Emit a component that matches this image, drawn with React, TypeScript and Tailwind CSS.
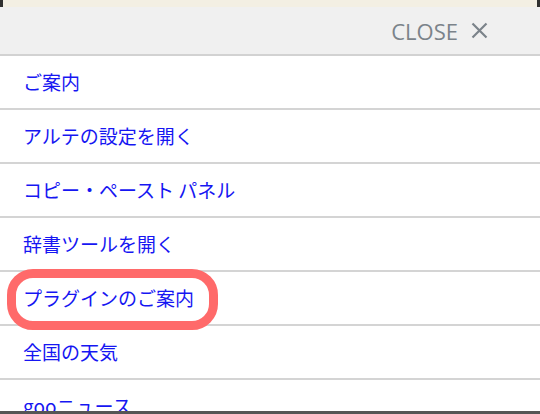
import React from "react";

const items = [
  "ご案内",
  "アルテの設定を開く",
  "コピー・ペースト パネル",
  "辞書ツールを開く",
  "プラグインのご案内",
  "全国の天気",
  "gooニュース",
];

export default function App() {
  return (
    <div className="relative w-[540px] h-[414px] overflow-hidden bg-white">
      <div className="flex h-[7px] bg-[#f3efe3]">
        <div className="w-[3px] bg-[#2f2f2f]" />
        <div className="flex-1" />
        <div className="w-[3px] bg-[#2f2f2f]" />
      </div>
      <div className="flex h-[49px] items-center justify-end border-b-2 border-[#d2d2d2] bg-[#f0f0f0] pr-[52px]">
        <span
          className="text-[22px] font-normal leading-none tracking-[0px] text-[#7b838a]"
          style={{ fontFamily: '"Open Sans", "Liberation Sans", sans-serif' }}
        >
          CLOSE
        </span>
        <svg width="17" height="17" viewBox="0 0 17 17" className="ml-[13px]">
          <path d="M1.5 1.5 L15.5 15.5 M15.5 1.5 L1.5 15.5" stroke="#7b838a" strokeWidth="2.2" />
        </svg>
      </div>
      <div
        className="flex flex-col"
        style={{ fontFamily: '"Noto Sans CJK JP", "Noto Sans", sans-serif' }}
      >
        {items.map((t, i) => (
          <div
            key={i}
            className="relative flex h-[54px] shrink-0 items-center border-b-2 border-[#d4d4d4] pl-[23px] text-[19px] text-[#1616f2]"
          >
            {t}
            {i === 4 && (
              <div className="pointer-events-none absolute left-[7px] top-[-3px] h-[61px] w-[211px] rounded-[26px] border-[9px] border-[#ff6a6a]" />
            )}
          </div>
        ))}
      </div>
      <div className="absolute bottom-0 left-0 h-[3px] w-full bg-[#555]" />
    </div>
  );
}
